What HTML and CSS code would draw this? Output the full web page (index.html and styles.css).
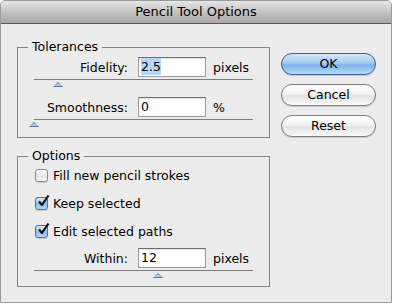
FILE: index.html
```html
<!DOCTYPE html>
<html>
<head>
<meta charset="utf-8">
<link rel="stylesheet" href="styles.css">
</head>
<body>
<div class="window">
  <div class="titlebar">Pencil Tool Options</div>
  <div class="content">
    <div class="left">
      <fieldset class="group tol">
        <legend>Tolerances</legend>
        <div class="row">
          <span class="lbl">Fidelity:</span>
          <span class="field"><span class="sel">2.5</span></span>
          <span class="unit">pixels</span>
        </div>
        <div class="slider"><span class="thumb" style="left:19px"></span></div>
        <div class="row">
          <span class="lbl">Smoothness:</span>
          <span class="field">0</span>
          <span class="unit">%</span>
        </div>
        <div class="slider"><span class="thumb" style="left:-5px"></span></div>
      </fieldset>
      <fieldset class="group opts">
        <legend>Options</legend>
        <div class="check"><span class="box"></span>Fill new pencil strokes</div>
        <div class="check"><span class="box on"><svg viewBox="0 0 14 14" width="14" height="14"><path d="M3 6.5 L6 10 L12.5 0.5" fill="none" stroke="#111" stroke-width="2.2" stroke-linejoin="round"/></svg></span>Keep selected</div>
        <div class="check"><span class="box on"><svg viewBox="0 0 14 14" width="14" height="14"><path d="M3 6.5 L6 10 L12.5 0.5" fill="none" stroke="#111" stroke-width="2.2" stroke-linejoin="round"/></svg></span>Edit selected paths</div>
        <div class="row within">
          <span class="lbl">Within:</span>
          <span class="field">12</span>
          <span class="unit">pixels</span>
        </div>
        <div class="slider last"><span class="thumb" style="left:119px"></span></div>
      </fieldset>
    </div>
    <div class="buttons">
      <div class="btn default">OK</div>
      <div class="btn">Cancel</div>
      <div class="btn">Reset</div>
    </div>
  </div>
</div>
</body>
</html>
```
FILE: styles.css
```css
html, body {
  margin: 0;
  padding: 0;
  background: #ffffff;
}
body {
  font-family: "DejaVu Sans", "Liberation Sans", sans-serif;
  font-size: 12.5px;
  color: #000;
}
.window {
  width: 392px;
  height: 303px;
  box-sizing: border-box;
  border: 1px solid #9c9c9c;
  border-radius: 5px 5px 0 0;
  background: #ececec;
  overflow: hidden;
}
.titlebar {
  height: 22px;
  line-height: 22px;
  text-align: center;
  font-size: 13px;
  background: linear-gradient(#e6e6e6, #bdbdbd 60%, #a9a9a9);
  border-bottom: 1px solid #575757;
}
.content {
  display: flex;
  padding: 15px 0 0 16px;
}
.left {
  width: 253px;
}
.group {
  margin: 0;
  padding: 0;
  border: 1px solid #858585;
  min-inline-size: 0;
}
.group legend {
  margin-left: 10px;
  padding: 0 4px;
  line-height: 16px;
  height: 16px;
}
.tol {
  padding-top: 2px;
}
.opts {
  margin-top: 10px;
  padding-top: 1px;
}
.row {
  display: flex;
  align-items: center;
  height: 20px;
}
.lbl {
  width: 110px;
  text-align: right;
  margin-right: 10px;
}
.field {
  width: 68px;
  height: 20px;
  box-sizing: border-box;
  background: #fff;
  border: 1px solid #9a9a9a;
  border-top-color: #6e6e6e;
  box-shadow: inset 0 1px 1px rgba(0,0,0,0.12);
  padding: 0 2px;
  line-height: 18px;
}
.sel {
  background: #b5d5ff;
  display: inline-block;
  line-height: 17px;
}
.unit {
  margin-left: 7px;
}
.slider {
  position: relative;
  margin: 2px 16px 0 16px;
  height: 17px;
  border-top: 1px solid #7e7e7e;
}
.slider.last {
  height: 15px;
}
.thumb {
  position: absolute;
  top: 2px;
  width: 0;
  height: 0;
  border-left: 5px solid transparent;
  border-right: 5px solid transparent;
  border-bottom: 5px solid #5d6f8c;
}
.thumb::after {
  content: "";
  position: absolute;
  left: -4px;
  top: 1px;
  border-left: 4px solid transparent;
  border-right: 4px solid transparent;
  border-bottom: 3.5px solid #b6cdea;
}
.check {
  display: flex;
  align-items: center;
  height: 20px;
  margin-left: 17px;
  margin-top: 8px;
}
.check:first-of-type {
  margin-top: 0;
}
.box {
  position: relative;
  width: 13px;
  height: 13px;
  box-sizing: border-box;
  margin-right: 5px;
  border: 1px solid #8a8a8a;
  border-radius: 3px;
  background: linear-gradient(#ffffff, #e4e4e4 60%, #f4f4f4);
  box-shadow: 0 1px 1px rgba(0,0,0,0.15);
}
.box.on {
  border-color: #4f6f99;
  background: linear-gradient(#d9e9fb, #8fbde9 55%, #b6d8f7);
}
.box svg {
  position: absolute;
  left: 0;
  top: -3px;
}
.within {
  margin-top: 7px;
}
.buttons {
  display: flex;
  flex-direction: column;
  gap: 9px;
  margin-left: 11px;
  margin-top: 14px;
}
.btn {
  width: 95px;
  height: 22px;
  box-sizing: border-box;
  border: 1px solid #7d7d7d;
  border-radius: 11px;
  background: linear-gradient(#ffffff, #f2f2f2 45%, #e2e2e2 55%, #fbfbfb);
  text-align: center;
  line-height: 20px;
  box-shadow: 0 1px 1px rgba(0,0,0,0.15);
}
.btn.default {
  border-color: #3d5f93;
  background: linear-gradient(#d3e6fa, #a3cbf2 45%, #7cb2ea 55%, #b5dbfb);
}
```
